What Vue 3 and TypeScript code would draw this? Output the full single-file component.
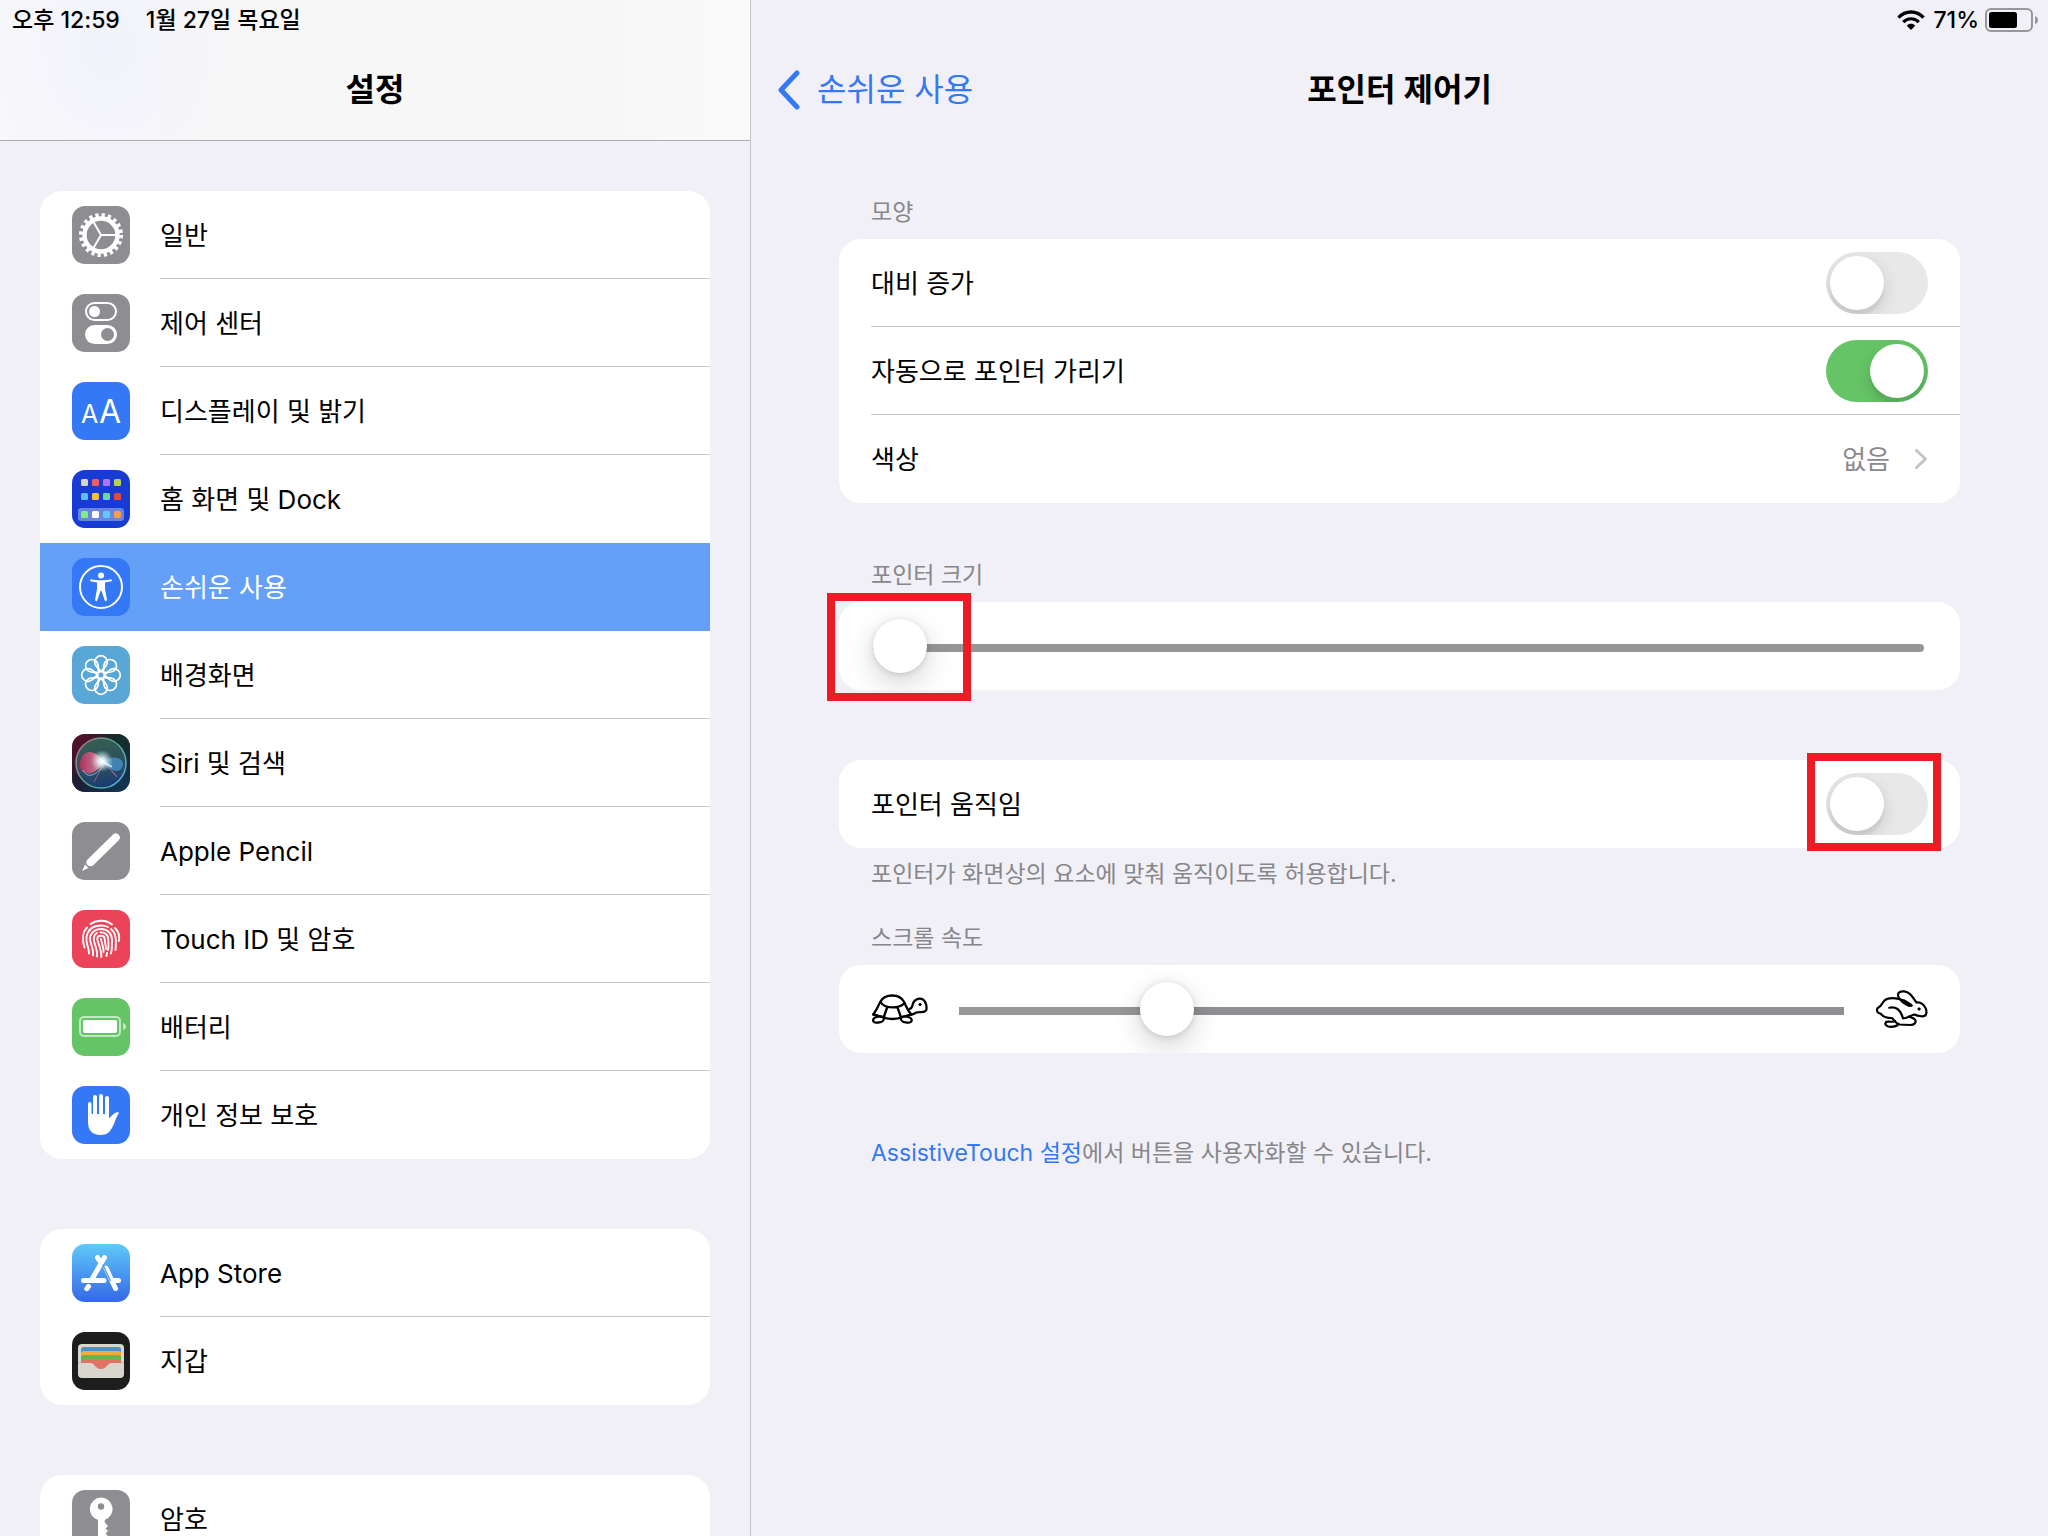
<script setup lang="ts">
import { computed, ref } from 'vue'

interface MenuItem {
  id: string
  label: string
}

const menuGroups: MenuItem[][] = [
  [
    { id: 'general', label: '일반' },
    { id: 'control', label: '제어 센터' },
    { id: 'display', label: '디스플레이 및 밝기' },
    { id: 'home', label: '홈 화면 및 Dock' },
    { id: 'access', label: '손쉬운 사용' },
    { id: 'wallpaper', label: '배경화면' },
    { id: 'siri', label: 'Siri 및 검색' },
    { id: 'pencil', label: 'Apple Pencil' },
    { id: 'touch', label: 'Touch ID 및 암호' },
    { id: 'battery', label: '배터리' },
    { id: 'privacy', label: '개인 정보 보호' },
  ],
  [
    { id: 'store', label: 'App Store' },
    { id: 'wallet', label: '지갑' },
  ],
  [{ id: 'passwords', label: '암호' }],
]

const selected = ref('access')
const contrast = ref(false)
const autoHide = ref(true)
const pointerMotion = ref(false)
const pointerSize = ref(0)
const scrollSpeed = ref(21.8)

const scrollFill = computed(() => ({ '--fill': `${scrollSpeed.value}%` }))

const petals = [0, 45, 90, 135, 180, 225, 270, 315]
const homeDots = [
  { y: 9, colors: ['#d6d5cc', '#ef5f68', '#ad74f6', '#b7d056'] },
  { y: 23, colors: ['#5ebdf6', '#f6bf40', '#6fd6a5', '#e6493a'] },
  { y: 41, colors: ['#80ef83', '#ffffff', '#5fc9f9', '#f0a050'] },
]
</script>

<template>
  <div class="screen">
    <aside class="sidebar">
      <header class="side-head">
        <div class="status"><span>오후 12:59</span><span>1월 27일 목요일</span></div>
        <h1 class="title">설정</h1>
      </header>
      <nav class="menu">
        <div v-for="(group, g) in menuGroups" :key="g" class="card">
          <a
            v-for="item in group"
            :key="item.id"
            href="#"
            class="item"
            :class="{ active: item.id === selected }"
            @click.prevent="selected = item.id"
          >
            <span class="icon" :class="item.id">
              <svg viewBox="0 0 58 58" width="58" height="58" aria-hidden="true">
                <g v-if="item.id === 'general'" fill="none" stroke="#fff">
                  <circle cx="29" cy="29" r="16.500" stroke-width="4.400" />
                  <circle cx="29" cy="29" r="19.500" stroke-width="5" stroke-dasharray="3.200 2.926" />
                  <path d="M29 29H44M29 29L21.5 16M29 29L21.5 42" stroke-width="2" />
                </g>
                <g v-else-if="item.id === 'control'">
                  <rect x="14" y="9" width="30" height="17" rx="8.5" fill="none" stroke="#fff" stroke-width="2" />
                  <circle cx="22.5" cy="17.5" r="5.5" fill="#fff" />
                  <rect x="13" y="31" width="32" height="19" rx="9.5" fill="#fff" />
                  <circle cx="35.5" cy="40.5" r="6.5" fill="#8e8d92" />
                </g>
                <g v-else-if="item.id === 'display'" class="glyphs" fill="#fff">
                  <text x="9" y="41" font-size="25">A</text>
                  <text x="27" y="41" font-size="32">A</text>
                </g>
                <g v-else-if="item.id === 'home'">
                  <rect x="6" y="38" width="46" height="13" rx="3" fill="#6985e1" />
                  <template v-for="row in homeDots" :key="row.y">
                    <rect
                      v-for="(c, i) in row.colors"
                      :key="i"
                      :x="9 + i * 11"
                      :y="row.y"
                      width="7"
                      height="7"
                      rx="1.5"
                      :fill="c"
                    />
                  </template>
                </g>
                <g v-else-if="item.id === 'access'">
                  <circle cx="29" cy="29" r="21" fill="none" stroke="#fff" stroke-width="2" />
                  <circle cx="29" cy="17.5" r="3" fill="#fff" />
                  <path
                    d="M19 21.2C25 22.6 33 22.6 39 21.2Q40.800 22 39.500 23.200L33 24.400V31L35 42Q34 44 32.800 42.500L29.600 33H28.400L25.200 42.500Q24 44 23 42L25 31V24.400L18.500 23.200Q17.200 22 19 21.200Z"
                    fill="#fff"
                  />
                </g>
                <g v-else-if="item.id === 'wallpaper'" fill="none" stroke="#fff" stroke-width="1.7">
                  <path
                    v-for="deg in petals"
                    :key="deg"
                    d="M29 25.500C26.500 22.500 22.700 20 22.700 16A6.300 6.300 0 0 1 35.300 16C35.300 20 31.500 22.500 29 25.500Z"
                    :transform="`rotate(${deg} 29 29)`"
                  />
                  <circle cx="29" cy="29" r="3.500" />
                </g>
                <g v-else-if="item.id === 'siri'">
                  <defs>
                    <linearGradient id="siri-bg" x1="0" y1="0" x2="1" y2="1">
                      <stop offset="0" stop-color="#5c1026" />
                      <stop offset="0.450" stop-color="#1f1c33" />
                      <stop offset="1" stop-color="#0e3a57" />
                    </linearGradient>
                    <radialGradient id="siri-green" cx="0.900" cy="0.100" r="0.600">
                      <stop offset="0" stop-color="#123029" />
                      <stop offset="1" stop-color="#123029" stop-opacity="0" />
                    </radialGradient>
                    <linearGradient id="siri-orb" x1="0.300" y1="0" x2="0.500" y2="1">
                      <stop offset="0" stop-color="#32604f" />
                      <stop offset="0.550" stop-color="#30505f" />
                      <stop offset="1" stop-color="#173d72" />
                    </linearGradient>
                    <linearGradient id="siri-rim" x1="0" y1="0.200" x2="1" y2="0.800">
                      <stop offset="0" stop-color="#c76d84" />
                      <stop offset="0.500" stop-color="#4fa68f" />
                      <stop offset="1" stop-color="#56b2df" />
                    </linearGradient>
                    <radialGradient id="siri-glow">
                      <stop offset="0" stop-color="#fff" />
                      <stop offset="0.300" stop-color="#eefcff" stop-opacity="0.850" />
                      <stop offset="1" stop-color="#bfeee6" stop-opacity="0" />
                    </radialGradient>
                    <linearGradient id="siri-pink" x1="0" y1="0" x2="1" y2="0">
                      <stop offset="0" stop-color="#c02c5a" />
                      <stop offset="1" stop-color="#f29ab0" />
                    </linearGradient>
                  </defs>
                  <rect width="58" height="58" fill="url(#siri-bg)" />
                  <rect width="58" height="58" fill="url(#siri-green)" />
                  <circle cx="29" cy="29" r="25" fill="url(#siri-orb)" stroke="url(#siri-rim)" stroke-width="1.500" />
                  <path d="M32 29C26 18 16 15 11 21C6 28 7 37 13 39C20 41 26 36 32 29Z" fill="url(#siri-pink)" opacity="0.850" />
                  <path d="M11 36C15 45 24 42 33 30" fill="none" stroke="#7fb6dc" />
                  <path d="M30 29C37 22 46 22 50 27C53 32 49 37 45 37C39 37 35 33 30 29Z" fill="#4691c4" opacity="0.800" />
                  <path d="M33 30L45 43L40 37M31 31L22 48" stroke="#c56fa0" fill="none" opacity="0.700" />
                  <circle cx="30" cy="27" r="11" fill="url(#siri-glow)" />
                  <path d="M30 27L40 33" stroke="#fff" stroke-width="2" opacity="0.700" />
                </g>
                <g v-else-if="item.id === 'pencil'" fill="#fff">
                  <path d="M41 12.500A4 4 0 0 1 46.500 18.500L21.500 43Q18 45.500 15.500 43Q13 40.500 15.500 37.500Z" />
                  <path d="M13 42.500L16.500 46L10 49Z" />
                </g>
                <g v-else-if="item.id === 'touch'" fill="none" stroke="#fff" stroke-width="1.900" stroke-linecap="round">
                  <path d="M18.500 14C25 9.500 34 9.500 40 14.500" />
                  <path d="M12.500 37.500C10 30 10.500 22 15 17.500" />
                  <path d="M43 18C47 22 47.800 27 46.800 31" />
                  <path d="M17 43.500C17 37 13.500 33 14.500 27C16 19 22 15.500 29 15.500C32 15.500 34 16 36 17" />
                  <path d="M39 19C44 23 44.500 29 43.500 40" />
                  <path d="M21 45.500C22 38 17.500 33 18 28C18.500 22.500 23 19 29 19C36 19 40 24 40 30C40 36 40 40 39 43.500" />
                  <path d="M25 46.500C26 39 21.500 33 21.700 28.500C22 25.500 23 24 25 23" />
                  <path d="M28.500 22.400C33 22 36 25 36.200 29C36.500 33 37 36 36 40" />
                  <path d="M29.300 47C30 40 25.300 32 25.300 29C25.300 25 32.500 24.500 32.700 29C33 33 34 36 34 39" />
                  <path d="M29 29C29.500 33 32 38 31.500 42M35 43L34.500 46" />
                </g>
                <g v-else-if="item.id === 'battery'">
                  <rect x="8" y="19" width="40" height="19" rx="4" fill="none" stroke="#c1e8c2" stroke-width="2" />
                  <rect x="11" y="22" width="34" height="13" rx="2" fill="#fff" />
                  <path d="M51 25Q54 26 54 28.500Q54 31 51 32Z" fill="#c1e8c2" />
                </g>
                <g v-else-if="item.id === 'privacy'" fill="#fff">
                  <rect x="16" y="16" width="3.500" height="22" rx="1.700" />
                  <rect x="21" y="9" width="4" height="24" rx="2" />
                  <rect x="27" y="8" width="4" height="24" rx="2" />
                  <rect x="33" y="10" width="4" height="24" rx="2" />
                  <path d="M16 29L20 28H35.500Q37 28 37.200 32.500C40 29.500 42 26.500 45 26.200Q47.800 26 46.800 27.200C44 31 43.500 35 40.500 41C38 46 35 49 28.500 49C20 49 16 44 16 36Z" />
                </g>
                <g v-else-if="item.id === 'store'" fill="none" stroke="#fff" stroke-width="5" stroke-linecap="round">
                  <path d="M32.500 13.500L19.500 36M25.500 13.500L28 17.500M34 24L43.500 44.500M11.500 36.500H32M40.500 36.500H46.500M16.500 42.500L14.800 44.700" />
                  <path d="M30.800 20.500L38.500 37" stroke="#4a90ef" stroke-width="1.200" stroke-linecap="butt" />
                </g>
                <g v-else-if="item.id === 'wallet'">
                  <rect x="6" y="12" width="46" height="34" rx="4" fill="#d9d6cd" />
                  <path d="M9 31V17.500Q9 15 11.500 15H46.500Q49 15 49 17.500V31Z" fill="#4c92c4" />
                  <path d="M9 31V21.500Q9 19 11.500 19H46.500Q49 19 49 21.500V31Z" fill="#f5ab35" />
                  <path d="M9 31V25.500Q9 23 11.500 23H46.500Q49 23 49 25.500V31Z" fill="#6ab547" />
                  <path d="M9 31V29.500Q9 27 11.500 27H46.500Q49 27 49 29.500V31H39C35.500 31 35 37 29 37C23 37 22.500 31 19 31Z" fill="#e07364" />
                  <path d="M6 30.800H9M49 30.800H52" stroke="#bab7ae" />
                </g>
                <g v-else>
                  <path
                    d="M29 7.500A11.500 11.500 0 0 1 33 29.800L32.500 32L36 36L33.500 38.500L36 41L33.500 43.500L36 46L32 52L29 55L26 52V30A11.500 11.500 0 0 1 29 7.500Z"
                    fill="#fff"
                  />
                  <circle cx="29" cy="16.500" r="3.200" fill="#8e8d8f" />
                </g>
              </svg>
            </span>
            <span class="item-label">{{ item.label }}</span>
          </a>
        </div>
      </nav>
    </aside>

    <main class="detail">
      <header class="detail-head">
        <div class="status right">
          <svg viewBox="0 0 28 20" width="28" height="20" aria-label="Wi-Fi">
            <g fill="none" stroke="#000">
              <path d="M1.500 7.600C8.500 0.200 19.500 0.200 26.500 7.600" stroke-width="3.400" />
              <path d="M6.200 12.200C10.500 7.600 17.500 7.600 21.800 12.200" stroke-width="3.200" />
            </g>
            <path d="M14 20L9.800 15.700C12.200 13.200 15.800 13.200 18.200 15.700Z" />
          </svg>
          <span class="percent">71%</span>
          <svg viewBox="0 0 54 24" width="54" height="24" aria-label="Battery">
            <rect x="1" y="1" width="46" height="22" rx="5" fill="none" stroke="#98979b" stroke-width="2" />
            <rect x="4" y="4" width="28" height="16" rx="2.500" />
            <path d="M50 8Q53 9 53 12Q53 15 50 16Z" fill="#98979b" />
          </svg>
        </div>
        <div class="navbar">
          <a href="#" class="back">
            <svg viewBox="0 0 24 40" width="24" height="40" aria-hidden="true">
              <path d="M20 3L4 20L20 37" fill="none" stroke="#3478f6" stroke-width="5" stroke-linecap="round" stroke-linejoin="round" />
            </svg>
            <span>손쉬운 사용</span>
          </a>
          <h2 class="title">포인터 제어기</h2>
        </div>
      </header>

      <div class="content">
        <h3 class="caption">모양</h3>
        <section class="card">
          <label class="row"><span class="row-text">대비 증가</span><input v-model="contrast" class="switch" type="checkbox" /></label>
          <label class="row"><span class="row-text">자동으로 포인터 가리기</span><input v-model="autoHide" class="switch" type="checkbox" /></label>
          <a href="#" class="row">
            <span class="row-text">색상</span>
            <span class="value">
              <span class="row-text">없음</span>
              <svg viewBox="0 0 14 22" width="14" height="22" aria-hidden="true">
                <path d="M2.500 2.500L11.500 11L2.500 19.500" fill="none" stroke="#c4c4c6" stroke-width="3" stroke-linecap="round" stroke-linejoin="round" />
              </svg>
            </span>
          </a>
        </section>

        <h3 id="size-label" class="caption">포인터 크기</h3>
        <div class="marked">
          <section class="card">
            <div class="row size-row">
              <input v-model.number="pointerSize" class="slider" type="range" min="0" max="100" aria-labelledby="size-label" />
            </div>
          </section>
          <span class="mark mark-slider"></span>
        </div>

        <div class="marked motion">
          <section class="card">
            <label class="row"><span class="row-text">포인터 움직임</span><input v-model="pointerMotion" class="switch" type="checkbox" /></label>
          </section>
          <span class="mark mark-switch"></span>
        </div>
        <p class="note">포인터가 화면상의 요소에 맞춰 움직이도록 허용합니다.</p>

        <h3 id="speed-label" class="caption speed-caption">스크롤 속도</h3>
        <section class="card">
          <div class="row speed-row">
            <svg viewBox="0 0 58 30" width="58" height="30" aria-hidden="true" fill="none" stroke="#000" stroke-width="2.300" stroke-linecap="round" stroke-linejoin="round">
              <path d="M2 20.500C5.500 17 7 12 9.500 7.500C12 3 16 1.500 21.300 1.500C26.500 1.500 30 3 32.500 7C35 11 36 16.500 40.500 20.500C34 21.500 30 25 21.300 25C13 25 9 21.500 2 20.500Z" />
              <path d="M9.500 8C12 12 16 13.300 21.300 13.300C26.500 13.300 31 12 33.500 9M16.300 13L13 22.500M26.300 13L29.700 22.500" />
              <ellipse cx="7.500" cy="25.500" rx="5.500" ry="3" transform="rotate(-12 7.500 25.500)" />
              <ellipse cx="35.300" cy="25.500" rx="5.500" ry="3" transform="rotate(12 35.300 25.500)" />
              <path d="M38.500 15C42 14.500 41 10 43 7.500C46 3.500 51.500 3.800 53.500 7C55.500 10 56.500 15 54.500 17C52 19 48 17.500 45.500 18.500C43.500 19.500 42.500 20.500 40.500 20.500" />
              <circle cx="49" cy="10.500" r="1.200" fill="#000" stroke-width="0.800" />
            </svg>
            <input
              v-model.number="scrollSpeed"
              class="slider square"
              type="range"
              min="0"
              max="100"
              step="any"
              aria-labelledby="speed-label"
              :style="scrollFill"
            />
            <svg viewBox="0 0 54 40" width="54" height="40" aria-hidden="true" fill="none" stroke="#000" stroke-width="2.200" stroke-linecap="round" stroke-linejoin="round">
              <path d="M37.500 16.500C34 14.500 31 11 25 9.800C19 8.600 13.500 8.500 10.500 11.500C8 14 7.500 17 4.500 18.500C2.500 19.500 2.500 22 4 23.500C5 24.500 6.500 24 8 26C10 28.500 13 29 18 29C20 31 21.500 34 25 35.500L36.500 36C40.500 36 42 33.500 41.500 31.500C41 29.500 38 29 35 27.500" />
              <path d="M37.500 16.500C34.500 18 30.500 14.500 27.500 12C24.500 9.500 23 6 25 3.500C27.500 1.500 32.500 2 36 5C39 8 41 11.500 42.500 13.500C46.500 12.800 50.500 15.500 52 20C53 24 52.500 27.500 48 27.300C44.500 27 43 27 40.500 25.500C37 26 34.500 29 29 29.500C28 26 27 22.500 23.500 20C21 18.300 18.500 18 15.300 18.700M30 11.500L36.500 15.500" />
              <path d="M21 32C17 34 14 31.500 12 33C10.500 35 12 37.800 16.500 37.800C20.500 37.800 23 37 24.500 35" />
              <circle cx="45" cy="20" r="1.200" fill="#000" stroke-width="0.800" />
            </svg>
          </div>
        </section>
        <p class="note assist"><a href="#">AssistiveTouch 설정</a>에서 버튼을 사용자화할 수 있습니다.</p>
      </div>
    </main>
  </div>
</template>

<style>
body {
  margin: 0;
  background: #f1f0f6;
}
</style>

<style scoped>
.screen {
  display: flex;
  height: 100vh;
  overflow: hidden;
  background: #f1f0f6;
  color: #000;
  font-family: Inter, 'Noto Sans CJK KR', sans-serif;
  font-size: 26px;
  line-height: 40px;
}
.screen * {
  box-sizing: border-box;
}
h1,
h2,
h3,
p {
  margin: 0;
}
a {
  color: inherit;
  text-decoration: none;
}
svg {
  display: block;
  flex: none;
}
.sidebar {
  flex: none;
  width: 751px;
  border-right: 1px solid #c5c4c9;
  overflow: hidden;
}
.side-head {
  border-bottom: 1px solid #adadaf;
  background: radial-gradient(ellipse 140px 180px at 106px 46px, #f2f2fc, #f2f2fc00),
    linear-gradient(90deg, #f9f9fb, #f7f7f7 30%, #f7f7f7 80%, #fafafa);
}
.status {
  display: flex;
  gap: 26px;
  height: 40px;
  padding: 0 12px;
  font-size: 23px;
  font-weight: 500;
}
.status.right {
  align-items: center;
  justify-content: flex-end;
  gap: 6px;
  padding-right: 9px;
}
.percent {
  padding-left: 2px;
}
.title {
  font-size: 32px;
  font-weight: 600;
  line-height: 100px;
  text-align: center;
}
.menu {
  display: flex;
  flex-direction: column;
  gap: 70px;
  padding: 50px 40px 0;
}
.card {
  border-radius: 22px;
  background: #fff;
  overflow: hidden;
}
.item {
  display: flex;
  align-items: center;
  gap: 30px;
  height: 88px;
  padding-left: 32px;
}
.item-label {
  flex: 1;
  height: 88px;
  border-bottom: 1px solid #c6c6c8;
  line-height: 90px;
}
.item:last-child .item-label,
.item.active .item-label,
.item:has(+ .active) .item-label {
  border-bottom-color: transparent;
}
.item.active {
  background: #65a0f8;
  color: #fff;
}
.icon {
  flex: none;
  width: 58px;
  height: 58px;
  border-radius: 13px;
  overflow: hidden;
  background: #8e8d92;
}
.icon.display,
.icon.access,
.icon.privacy {
  background: #3478f6;
}
.icon.home {
  background: #183cd3;
}
.icon.wallpaper {
  background: #59a7d7;
}
.icon.touch {
  background: #eb4459;
}
.icon.battery {
  background: #65c466;
}
.icon.store {
  background: linear-gradient(#5ec9f8, #3568e8);
}
.icon.wallet {
  background: #1d1d1d;
}
.glyphs {
  font-family: Inter, sans-serif;
}

.detail {
  flex: 1;
  min-width: 0;
}
.navbar {
  display: grid;
  grid-template-columns: 1fr auto 1fr;
  align-items: center;
  height: 100px;
}
.back {
  display: flex;
  align-items: center;
  gap: 16px;
  padding-left: 26px;
  color: #3478f6;
  font-size: 32px;
}
.content {
  padding: 0 88px;
}
.caption,
.note {
  padding: 0 32px;
  color: #86868b;
  font-size: 23px;
  font-weight: 400;
  line-height: 30px;
}
.caption {
  margin: 57px 0 12px;
}
.speed-caption {
  margin-top: 34px;
}
.note {
  margin-top: 11px;
}
.assist {
  margin-top: 85px;
}
.assist a {
  color: #3478f6;
}
.row {
  position: relative;
  display: flex;
  align-items: center;
  justify-content: space-between;
  height: 88px;
  padding: 0 32px;
}
.row-text {
  padding-top: 2px;
}
.row + .row::before {
  content: '';
  position: absolute;
  top: -1px;
  right: 0;
  left: 32px;
  height: 1px;
  background: #c6c6c8;
}
.value {
  display: flex;
  align-items: center;
  gap: 24px;
  color: #8a8a8e;
}
.switch {
  appearance: none;
  flex: none;
  width: 102px;
  height: 62px;
  margin: 0;
  padding: 4px;
  border-radius: 31px;
  background: #e8e8e8;
  overflow: hidden;
}
.switch::before {
  content: '';
  display: block;
  width: 54px;
  height: 54px;
  border-radius: 50%;
  background: #fff;
  box-shadow: 0 6px 16px #00000026, 0 6px 2px #0000000a;
}
.switch:checked {
  background: #65c466;
}
.switch:checked::before {
  margin-left: auto;
}
.slider {
  appearance: none;
  flex: 1;
  min-width: 0;
  height: 62px;
  margin: 4px 0 0;
  background: transparent;
}
.slider::-webkit-slider-runnable-track {
  height: 8px;
  border-radius: 4px;
  background: #979797;
}
.slider.square::-webkit-slider-runnable-track {
  border-radius: 0;
  background: linear-gradient(90deg, #979797 var(--fill), #909092 var(--fill));
}
.slider::-webkit-slider-thumb {
  appearance: none;
  width: 54px;
  height: 54px;
  margin-top: -25px;
  border-radius: 50%;
  background: #fff;
  box-shadow: 0 10px 30px #0000002e, 0 1px 6px #00000024;
}
.size-row {
  padding: 0 36px 0 34px;
}
.speed-row {
  gap: 30px;
}
.marked {
  position: relative;
}
.motion {
  margin-top: 70px;
}
.mark {
  position: absolute;
  border: 8px solid #ed1c24;
  pointer-events: none;
}
.mark-slider {
  top: -9px;
  left: -12px;
  width: 144px;
  height: 108px;
}
.mark-switch {
  top: -7px;
  right: 19px;
  width: 134px;
  height: 98px;
}
</style>
